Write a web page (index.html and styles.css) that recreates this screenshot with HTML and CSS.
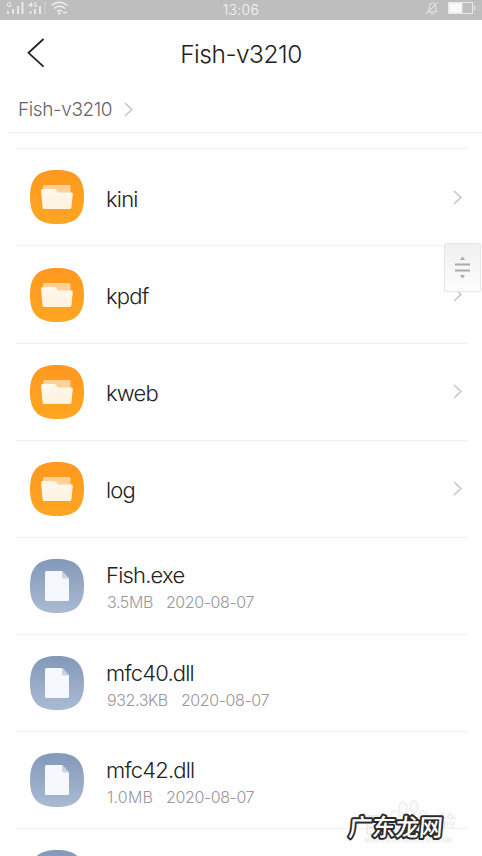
FILE: index.html
```html
<!DOCTYPE html>
<html lang="zh-CN">
<head>
<meta charset="utf-8">
<title>Fish-v3210</title>
<link rel="stylesheet" href="styles.css">
</head>
<body>
<svg class="defs" aria-hidden="true">
  <defs>
    <linearGradient id="blue" x2="0" y2="1"><stop stop-color="#8299b8"/><stop offset="1" stop-color="#aabad3"/></linearGradient>
    <linearGradient id="orange" x2="0" y2="1"><stop stop-color="#ff981f"/><stop offset="1" stop-color="#ffa622"/></linearGradient>
    <linearGradient id="front" x2="0" y2="1"><stop stop-color="#fff8ed"/><stop offset="1" stop-color="#fff2df"/></linearGradient>
    <symbol id="folder" viewBox="0 0 54 54">
      <path d="M27 0C45 0 54 7 54 27S45 54 27 54 0 47 0 27 9 0 27 0Z" fill="url(#orange)"/>
      <path d="M13 18V16.500Q13 15 14.500 15H39Q40.500 15 40.500 16.500V25H13Z" fill="#ffd197"/>
      <path d="M12.500 19H24Q25.500 19 26.500 20.500L28 22.500H41.500Q43 22.500 42.800 24L41.400 37.500Q41.200 39 39.700 39H14.300Q12.800 39 12.600 37.500L11 20.500Q11 19 12.500 19Z" fill="url(#front)"/>
    </symbol>
    <symbol id="file" viewBox="0 0 54 54">
      <path d="M27 0C45 0 54 7 54 27S45 54 27 54 0 47 0 27 9 0 27 0Z" fill="url(#blue)"/>
      <path d="M16.500 12H32L39 19.500V40.500Q39 42 37.500 42H16.500Q15 42 15 40.500V13.500Q15 12 16.500 12Z" fill="#f5f8fc"/>
      <path d="M32 12L39 19.500H33.500Q32 19.500 32 18Z" fill="#c8d3e1"/>
    </symbol>
    <symbol id="arrow" viewBox="0 0 9 15"><path d="M1 1L8 7.500L1 14" fill="none" stroke="currentColor" stroke-width="1.500"/></symbol>
  </defs>
</svg>
<div class="screen">
  <div class="status">
    <svg class="signals" width="64" height="16" viewBox="0 0 64 16" fill="none" stroke="#eee">
      <path d="M11 3.300Q10 2 8.500 2.500 7 3.500 7.500 5.500 8.500 7.500 11 6V5H9.500" stroke-width="1"/>
      <path d="M8 11V14M13 9V14M18 6V14M22.500 2V14" stroke-width="1.800"/>
      <path d="M31.500 7V2.500L28.500 5.500H32.500M37 3.300Q36 2 34.500 2.800 33.500 4 34 5.500 35 7.500 37 6V5H35.500" stroke-width="1"/>
      <path d="M30.500 11V14M35 9V14M40 6V14" stroke-width="1.800"/><path d="M45 2V14" stroke-opacity=".5"/>
      <path d="M51.500 5.500Q59.500-1 67.500 5.500M54 8.500Q59.500 4 65 8.500M57 11.500Q59.500 9.500 62 11.500" stroke-width="1.500"/>
      <path d="M58 13.500H61M63 12.500H67" stroke-width="1.500"/>
    </svg>
    <span class="time">13:06</span>
    <svg class="power" width="58" height="16" viewBox="0 0 58 16" fill="none" stroke="#e9e9e9">
      <path d="M4 12H13Q11.500 10 11.500 6.500T8.500 3 5.500 6.500 4 12ZM7 14H10M14 2L2 14"/>
      <path d="M24.500 2.500H48.500V13.500H24.500ZM50.500 5.500V10.500" stroke-width="1.200"/><path d="M25 3H38V13H25Z" fill="#fafafa"/>
    </svg>
  </div>
  <header class="header">
    <svg class="back" width="18" height="30" viewBox="0 0 18 30"><path d="M16.500 1L1.500 14.800L16.500 28.600" fill="none" stroke="#222" stroke-width="1.800"/></svg>
    <h1 class="title">Fish-v3210</h1>
  </header>
  <nav class="crumbs"><span class="crumb">Fish-v3210</span><svg class="chev"><use href="#arrow"/></svg></nav>
  <main class="list">
    <div class="row"><svg class="icon"><use href="#folder"/></svg><div class="name">kini</div><svg class="chev"><use href="#arrow"/></svg></div>
    <div class="row"><svg class="icon"><use href="#folder"/></svg><div class="name">kpdf</div><svg class="chev"><use href="#arrow"/></svg></div>
    <div class="row"><svg class="icon"><use href="#folder"/></svg><div class="name">kweb</div><svg class="chev"><use href="#arrow"/></svg></div>
    <div class="row"><svg class="icon"><use href="#folder"/></svg><div class="name">log</div><svg class="chev"><use href="#arrow"/></svg></div>
    <div class="row"><svg class="icon"><use href="#file"/></svg><div class="info"><div class="name">Fish.exe</div><div class="meta"><span>3.5MB</span><span>2020-08-07</span></div></div></div>
    <div class="row"><svg class="icon"><use href="#file"/></svg><div class="info"><div class="name">mfc40.dll</div><div class="meta"><span>932.3KB</span><span>2020-08-07</span></div></div></div>
    <div class="row"><svg class="icon"><use href="#file"/></svg><div class="info"><div class="name">mfc42.dll</div><div class="meta"><span class="spaced">1.0MB</span><span>2020-08-07</span></div></div></div>
    <div class="row"><svg class="icon"><use href="#file"/></svg></div>
  </main>
  <div class="scroller">
    <svg width="36" height="48" viewBox="0 0 36 48"><path d="M10 20.500H25M10 26.500H25" stroke="#aaa" stroke-width="2"/><path d="M15 16L17.500 12.500L20 16ZM15 31L17.500 34.500L20 31Z" fill="#aaa"/></svg>
  </div>
  <svg class="watermark" width="132" height="56" viewBox="0 0 132 56">
    <g fill="#fafafa" stroke="#eee" stroke-width="1.500"><ellipse cx="56" cy="12" rx="4" ry="6"/><ellipse cx="67" cy="11" rx="4" ry="6"/><ellipse cx="48" cy="20" rx="4" ry="5"/><ellipse cx="76" cy="20" rx="4" ry="5"/><path d="M50 34Q55 20 63 20T77 34Z"/></g>
    <path d="M18 20H33M20 25H32V38H20ZM20 31H32" fill="none" stroke="#eee" stroke-width="2"/>
    <text class="faint" x="91" y="32">验</text>
    <path d="M18 44H105" stroke="#f2f2f2" stroke-width="5" stroke-dasharray="5 1 3 1" />
    <text class="brand" transform="translate(1 39.500) skewX(-5)" textLength="94" lengthAdjust="spacingAndGlyphs">广东龙网</text>
  </svg>
</div>
</body>
</html>
```
FILE: styles.css
```css
* { box-sizing: border-box; }
body { margin: 0; background: #fefefe; font-family: Inter, "Noto Sans CJK SC", sans-serif; }
.defs { position: absolute; width: 0; height: 0; }
.screen { position: relative; height: 856px; overflow: hidden; background: #fefefe; }
svg { display: block; flex: none; }
.status { display: grid; grid-template-columns: 1fr auto 1fr; height: 20px; background: #bebebe; }
.signals { overflow: visible; }
.time { font-size: 14px; line-height: 19px; color: #f4f4f4; font-weight: 300; letter-spacing: .3px; }
.power { justify-self: end; margin-right: 1px; transform: translateX(1px); }
.header { display: grid; grid-template-columns: 46px 1fr 46px; align-items: center; height: 66px; }
.back { margin-left: 27px; }
.title { margin: 1px 0 0; font-size: 24.5px; line-height: 32px; font-weight: 300; letter-spacing: -.5px; text-align: center; color: #222; }
.crumbs { display: flex; align-items: center; gap: 12px; height: 47px; margin-left: 8px; padding-left: 10px; border-bottom: 1px solid #eee; }
.crumb { font-size: 19px; font-weight: 300; letter-spacing: -.4px; color: #666; }
.chev { width: 9px; height: 15px; color: #c4c4c4; }
.list { padding: 15.300px 15px 0 16px; }
.row { display: flex; align-items: center; height: 97.150px; padding: 0 5px 0 14px; border-top: 1px solid #f0f0f0; }
.icon { width: 54px; height: 54px; margin-right: 22px; }
.name { flex: 1; font-size: 22px; line-height: 28px; font-weight: 300; letter-spacing: -.8px; color: #222; }
.row > .name { padding-top: 3px; }
.info { padding-top: 6px; }
.meta { display: flex; gap: 13px; padding-left: 1px; font-size: 16px; line-height: 27px; font-weight: 300; letter-spacing: -.4px; color: #999; }
.spaced { letter-spacing: .2px; }
.scroller { position: absolute; left: 444px; top: 243px; width: 37px; height: 49px; border: 1px solid #e6e6e6; border-radius: 2px; background: linear-gradient(#f0f0f0, #fdfdfd); }
.watermark { position: absolute; left: 347px; top: 796px; overflow: visible; }
.brand { font: 500 24px "Noto Sans CJK SC", sans-serif; fill: #fff; stroke: #2b2b2b; stroke-width: 4px; stroke-linejoin: round; paint-order: stroke; }
.faint { font: 500 18px "Noto Sans CJK SC", sans-serif; fill: #eee; }
```
